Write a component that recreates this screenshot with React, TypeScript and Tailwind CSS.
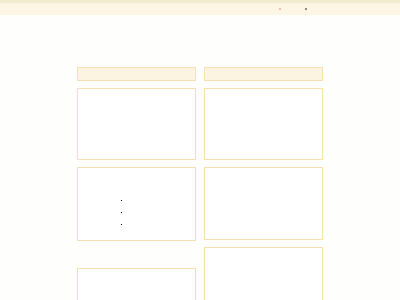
const Box = ({ h, children }: { h: string; children?: React.ReactNode }) => (
  <div className={`${h} border border-[#f6dfb3] bg-white`}>{children}</div>
);

const App = () => {
  return (
    <div className="min-h-[300px] bg-[#fefefd] font-['Liberation_Sans',sans-serif]">
      <div className="h-[3px] bg-[#f2eacd]" />
      <nav className="flex h-[12px] items-center bg-[#fdf6e5] pl-[279px]">
        <span className="h-[2px] w-[2px] bg-[#f2b7ae]" />
        <span className="ml-[24px] h-[2px] w-[2px] bg-[#8f8a80]" />
      </nav>
      <main className="mx-auto grid w-[246px] grid-cols-2 gap-x-[8px] pt-[52px]">
        <div className="flex flex-col">
          <div className="h-[14px] border border-[#f6dfb3] bg-[#fdf3e1]" />
          <div className="mt-[7px]">
            <Box h="h-[72px]" />
          </div>
          <div className="mt-[7px]">
            <Box h="h-[74px]">
              <ul className="pl-[43px] pt-[32px]">
                {[0, 1, 2].map((i) => (
                  <li key={i} className="h-[12px]">
                    <span className="block h-[1px] w-[1px] bg-black" />
                  </li>
                ))}
              </ul>
            </Box>
          </div>
          <div className="mt-[27px]">
            <Box h="h-[60px]" />
          </div>
        </div>
        <div className="flex flex-col">
          <div className="h-[14px] border border-[#f6dfb3] bg-[#fdf3e1]" />
          <div className="mt-[7px]">
            <Box h="h-[72px]" />
          </div>
          <div className="mt-[7px]">
            <Box h="h-[73px]" />
          </div>
          <div className="mt-[7px]">
            <Box h="h-[80px]" />
          </div>
        </div>
      </main>
    </div>
  );
};

export default App;
